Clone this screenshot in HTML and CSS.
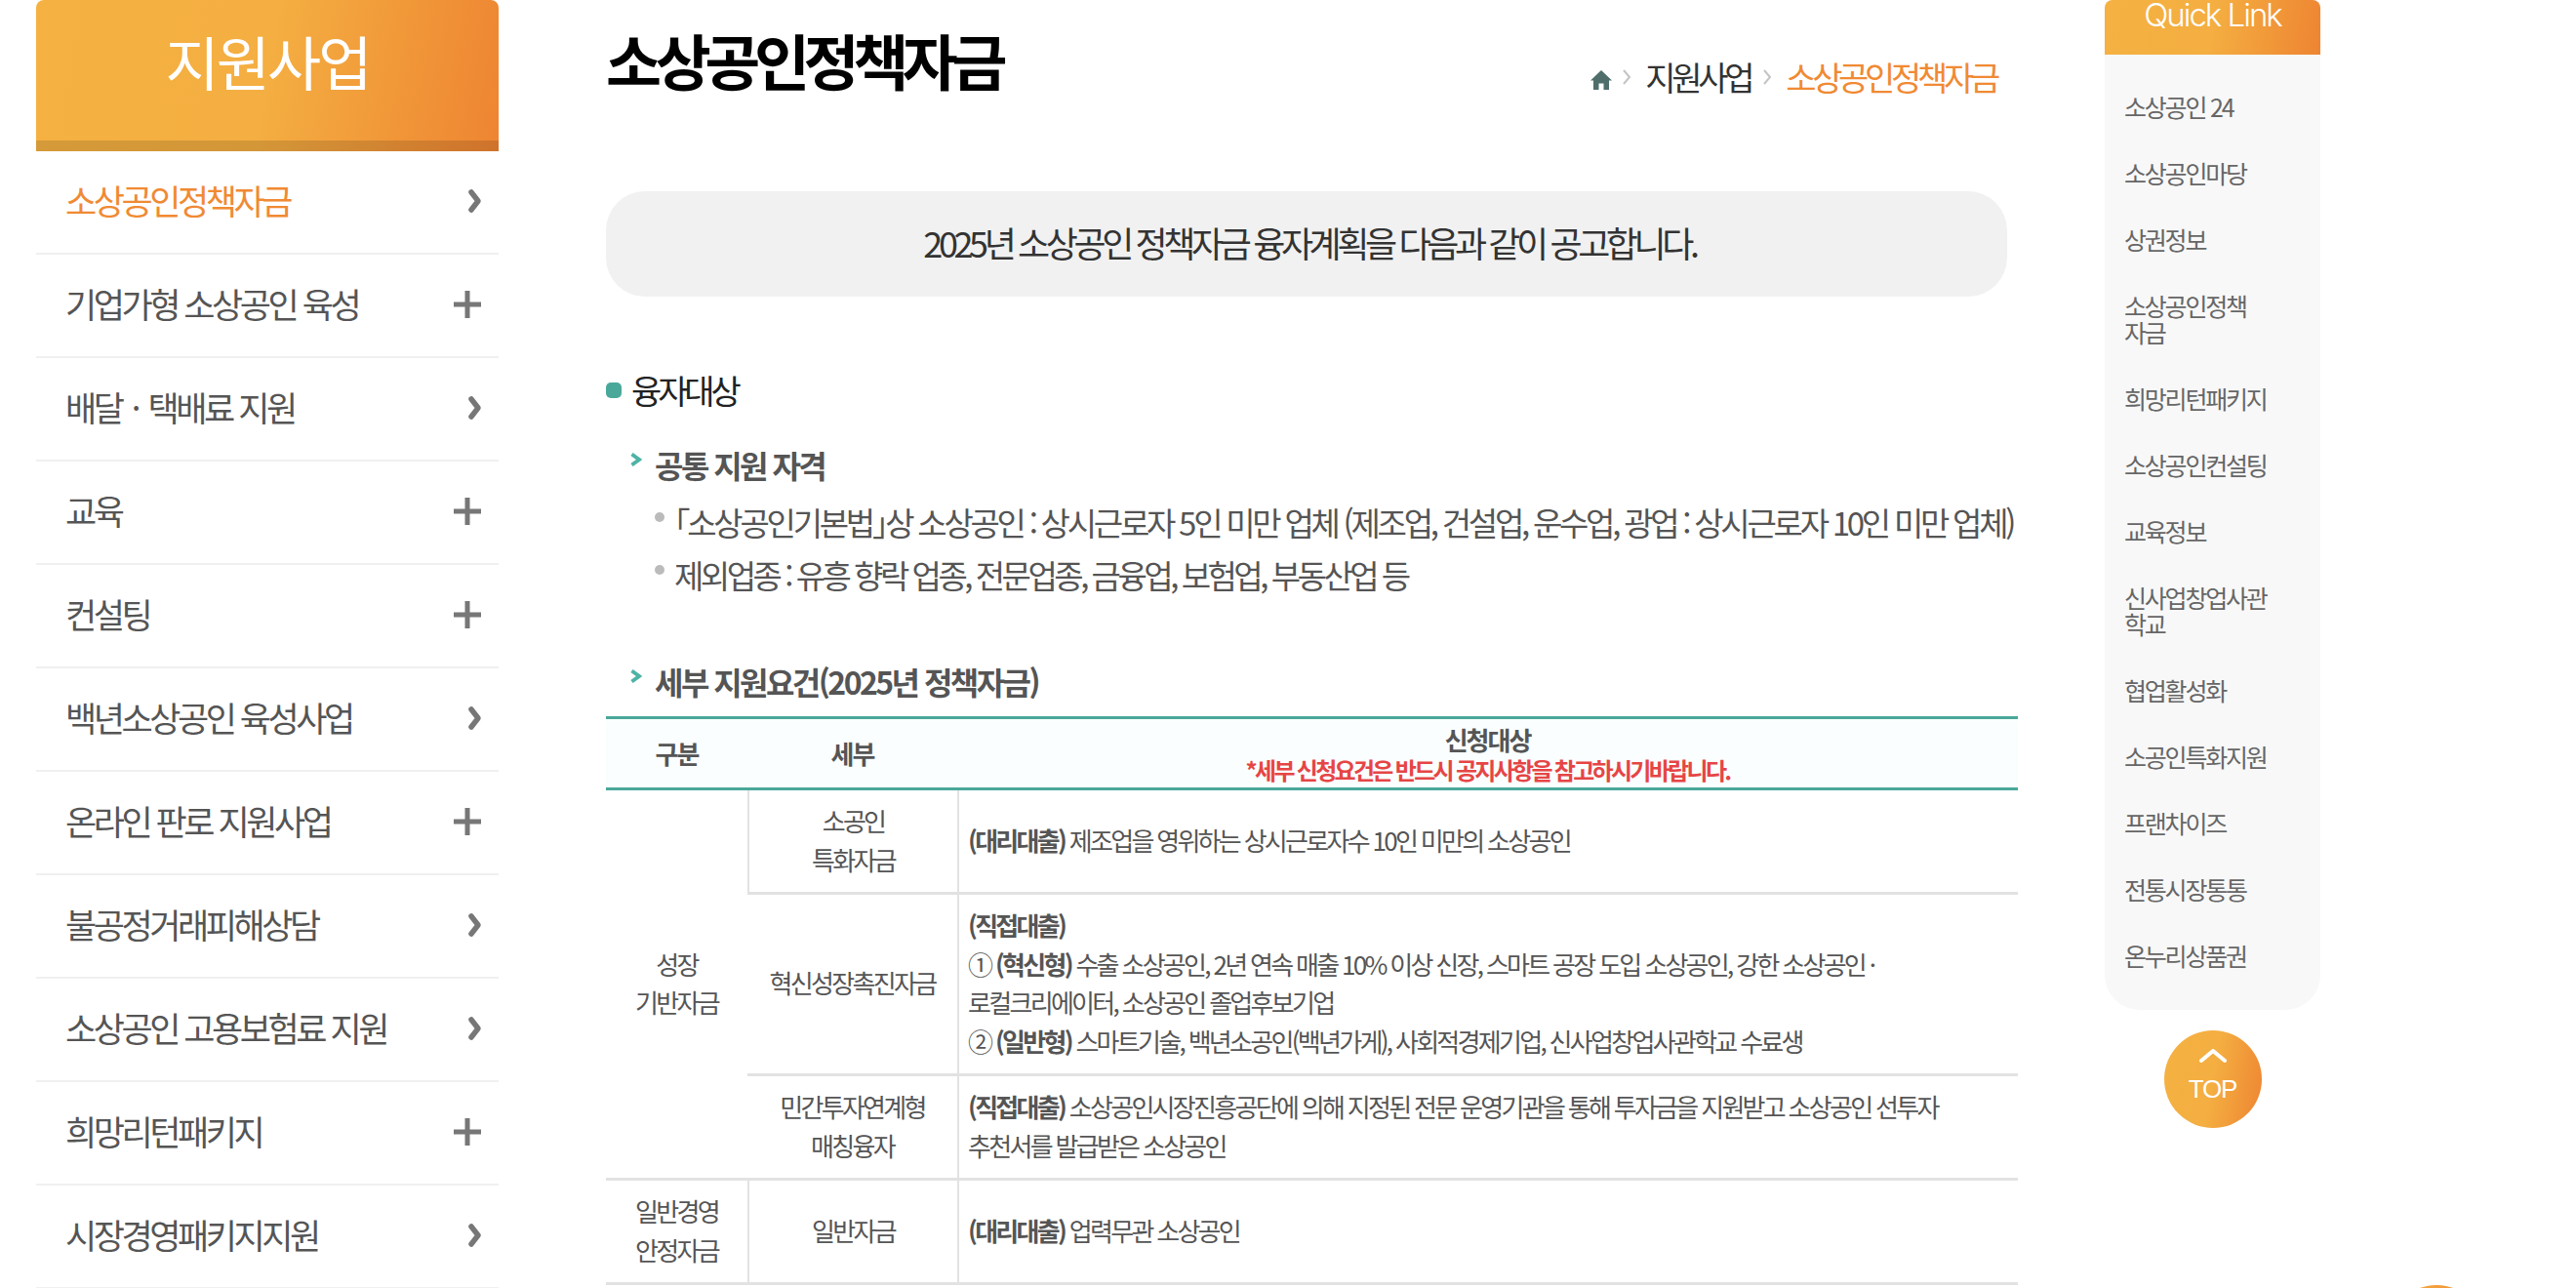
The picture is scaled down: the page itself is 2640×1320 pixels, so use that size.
FILE: index.html
```html
<!DOCTYPE html>
<html lang="ko">
<head>
<meta charset="utf-8">
<title>소상공인정책자금</title>
<link rel="stylesheet" href="styles.css">
</head>
<body>
<div class="page">
  <aside class="side">
    <h2 class="side-title">지원사업</h2>
    <ul class="side-menu">
      <li class="on"><span>소상공인정책자금</span><svg class="ic" viewBox="0 0 30 30"><path class="chev" d="M19 6 L26 15 L19 24"/></svg></li>
      <li><span>기업가형 소상공인 육성</span><svg class="ic" viewBox="0 0 30 30"><path class="plus" d="M1 15 H29 M15 1 V29"/></svg></li>
      <li><span>배달 <span class="mid">·</span> 택배료 지원</span><svg class="ic" viewBox="0 0 30 30"><path class="chev" d="M19 6 L26 15 L19 24"/></svg></li>
      <li><span>교육</span><svg class="ic" viewBox="0 0 30 30"><path class="plus" d="M1 15 H29 M15 1 V29"/></svg></li>
      <li><span>컨설팅</span><svg class="ic" viewBox="0 0 30 30"><path class="plus" d="M1 15 H29 M15 1 V29"/></svg></li>
      <li><span>백년소상공인 육성사업</span><svg class="ic" viewBox="0 0 30 30"><path class="chev" d="M19 6 L26 15 L19 24"/></svg></li>
      <li><span>온라인 판로 지원사업</span><svg class="ic" viewBox="0 0 30 30"><path class="plus" d="M1 15 H29 M15 1 V29"/></svg></li>
      <li><span>불공정거래피해상담</span><svg class="ic" viewBox="0 0 30 30"><path class="chev" d="M19 6 L26 15 L19 24"/></svg></li>
      <li><span>소상공인 고용보험료 지원</span><svg class="ic" viewBox="0 0 30 30"><path class="chev" d="M19 6 L26 15 L19 24"/></svg></li>
      <li><span>희망리턴패키지</span><svg class="ic" viewBox="0 0 30 30"><path class="plus" d="M1 15 H29 M15 1 V29"/></svg></li>
      <li><span>시장경영패키지지원</span><svg class="ic" viewBox="0 0 30 30"><path class="chev" d="M19 6 L26 15 L19 24"/></svg></li>
    </ul>
  </aside>

  <main class="main">
    <header class="head">
      <h1 class="title">소상공인정책자금</h1>
      <nav class="crumb">
        <svg class="home" viewBox="0 0 22 20"><path d="M11 0 L22 10.5 H19 V20 H13.5 V13.5 H8.5 V20 H3 V10.5 H0 Z"/></svg>
        <svg class="sep" viewBox="0 0 10 16"><path d="M2 1 L8 8 L2 15"/></svg>
        <span>지원사업</span>
        <svg class="sep" viewBox="0 0 10 16"><path d="M2 1 L8 8 L2 15"/></svg>
        <span class="cur">소상공인정책자금</span>
      </nav>
    </header>

    <p class="notice">2025년 소상공인 정책자금 융자계획을 다음과 같이 공고합니다.</p>

    <h3 class="h-a">융자대상</h3>
    <h4 class="h-b"><svg class="tri" viewBox="0 0 13 14"><path d="M2.5 1.5 L10 7 L2.5 12.5"/></svg>공통 지원 자격</h4>
    <ul class="dots">
      <li><span class="br">「</span>소상공인기본법<span class="br">」</span>상 소상공인 : 상시근로자 5인 미만 업체 (제조업, 건설업, 운수업, 광업 : 상시근로자 10인 미만 업체)</li>
      <li>제외업종 : 유흥 향락 업종, 전문업종, 금융업, 보험업, 부동산업 등</li>
    </ul>
    <h4 class="h-b h-b2"><svg class="tri" viewBox="0 0 13 14"><path d="M2.5 1.5 L10 7 L2.5 12.5"/></svg>세부 지원요건(2025년 정책자금)</h4>

    <table class="tbl">
      <colgroup><col class="c1"><col class="c2"><col></colgroup>
      <thead>
        <tr><th>구분</th><th>세부</th><th><div>신청대상</div><div class="red">*세부 신청요건은 반드시 공지사항을 참고하시기바랍니다.</div></th></tr>
      </thead>
      <tbody>
        <tr>
          <td class="ctr" rowspan="3">성장<br>기반자금</td>
          <td class="ctr">소공인<br>특화자금</td>
          <td><b>(대리대출)</b> 제조업을 영위하는 상시근로자수 10인 미만의 소상공인</td>
        </tr>
        <tr>
          <td class="ctr">혁신성장촉진자금</td>
          <td><b>(직접대출)</b><br>① <b>(혁신형)</b> 수출 소상공인, 2년 연속 매출 10% 이상 신장, 스마트 공장 도입 소상공인, 강한 소상공인 ·<br>로컬크리에이터, 소상공인 졸업후보기업<br>② <b>(일반형)</b> 스마트기술, 백년소공인(백년가게), 사회적경제기업, 신사업창업사관학교 수료생</td>
        </tr>
        <tr>
          <td class="ctr">민간투자연계형<br>매칭융자</td>
          <td><b>(직접대출)</b> 소상공인시장진흥공단에 의해 지정된 전문 운영기관을 통해 투자금을 지원받고 소상공인 선투자<br>추천서를 발급받은 소상공인</td>
        </tr>
        <tr>
          <td class="ctr">일반경영<br>안정자금</td>
          <td class="ctr">일반자금</td>
          <td><b>(대리대출)</b> 업력무관 소상공인</td>
        </tr>
      </tbody>
    </table>
  </main>

  <aside class="quick">
    <div class="quick-box">
      <h2 class="quick-title">Quick Link</h2>
      <ul class="quick-list">
        <li>소상공인 24</li>
        <li>소상공인마당</li>
        <li>상권정보</li>
        <li>소상공인정책<br>자금</li>
        <li>희망리턴패키지</li>
        <li>소상공인컨설팅</li>
        <li>교육정보</li>
        <li>신사업창업사관<br>학교</li>
        <li>협업활성화</li>
        <li>소공인특화지원</li>
        <li>프랜차이즈</li>
        <li>전통시장통통</li>
        <li>온누리상품권</li>
      </ul>
    </div>
    <a class="top">
      <svg viewBox="0 0 28 14"><path d="M2 12 L14 2 L26 12"/></svg>
      <span>TOP</span>
    </a>
  </aside>
</div>
<div class="float-btn"></div>
</body>
</html>
```

FILE: styles.css
```css
* { box-sizing: border-box; }
html, body { margin: 0; padding: 0; height: 100%; overflow: hidden; background: #fff; }
body { font-family: "Noto Sans CJK KR", "Noto Sans", sans-serif; color: #555; }
ul { list-style: none; margin: 0; padding: 0; }
h1, h2, h3, h4, p { margin: 0; font-weight: 400; }

.page { display: flex; align-items: flex-start; padding-left: 37px; }

.side { width: 474px; flex: none; }
.side-title {
  height: 155px; padding-top: 26px; text-align: center;
  font-size: 60px; line-height: 72px; letter-spacing: -3px; color: #fff;
  border-radius: 8px 8px 0 0;
  background: linear-gradient(100deg, #f5b142 0%, #f4ae41 50%, #ee8432 100%);
  box-shadow: inset 0 -11px 0 rgba(0,0,0,.13);
}
.side-menu li {
  height: 106px; padding: 0 17px 5px 30px;
  display: flex; align-items: center; justify-content: space-between;
  font-size: 35px; letter-spacing: -3.45px; color: #555;
  border-bottom: 2px solid #f0f0f0;
}
.side-menu li.on { color: #f08a33; }
.mid { margin: 0 4px; }
.ic { width: 30px; height: 30px; flex: none; margin-top: 3px; }
.chev, .plus { fill: none; stroke: #777; stroke-width: 5px; }
.chev { stroke-width: 5.5px; stroke-linecap: round; stroke-linejoin: round; }

.main { width: 1447px; flex: none; margin-left: 110px; }
.head { display: flex; align-items: flex-end; justify-content: space-between; height: 103px; padding-right: 22px; }
.title { font-size: 62px; line-height: 72px; font-weight: 700; letter-spacing: -6.4px; color: #000; margin-top: 25px; align-self: flex-start; }
.crumb { display: flex; align-items: center; font-size: 34px; line-height: 44px; letter-spacing: -4.3px; color: #333; margin-bottom: 2px; }
.cur { color: #f08a33; }
.home { width: 22px; height: 20px; fill: #4f6e6b; margin: 6px -2px 0 0; }
.sep { width: 10px; height: 16px; fill: none; stroke: #c4c4c4; stroke-width: 2px; margin: 0 14px 0 12px; }

.notice {
  width: 1436px; height: 108px; margin-top: 93px; border-radius: 40px; padding-left: 6px;
  background: #f1f1f1; text-align: center;
  font-size: 36px; line-height: 105px; letter-spacing: -4.4px; color: #333;
}
.h-a { position: relative; margin-top: 72px; padding-left: 26px; font-size: 34px; line-height: 48px; letter-spacing: -4.1px; color: #222; }
.h-a::before { content: ""; position: absolute; left: 0; top: 16px; width: 16px; height: 16px; border-radius: 5px; background: #4aa89a; }
.h-b { position: relative; padding-left: 50px; margin-top: 29px; font-size: 32px; line-height: 46px; font-weight: 700; letter-spacing: -2.55px; color: #555; }
.tri { position: absolute; left: 24px; top: 11px; width: 13px; height: 14px; fill: none; stroke: #4db3a5; stroke-width: 3.8px; }
.dots { margin-top: 9px; padding-left: 50px; }
.dots li { position: relative; padding-left: 20px; font-size: 33px; line-height: 54px; letter-spacing: -3.5px; color: #555; white-space: nowrap; }
.dots li:first-child { letter-spacing: -3.26px; }
.dots li::before { content: ""; position: absolute; left: 0; top: 17px; width: 10px; height: 10px; border-radius: 50%; background: #bbb; }
.br { font-feature-settings: "halt"; }
.h-b2 { margin-top: 59px; }

.tbl { width: 100%; border-collapse: separate; border-spacing: 0; table-layout: fixed; margin-top: 13px; font-size: 26px; line-height: 39.5px; letter-spacing: -2.7px; color: #555; }
.c1 { width: 145px; }
.c2 { width: 215px; }
.tbl th { height: 74px; padding: 4px 0; background: #fafefe; border-top: 3px solid #4aa89a; border-bottom: 3px solid #4aa89a; font-weight: 700; line-height: 34px; letter-spacing: -2px; color: #555; }
.tbl .red { color: #e64545; font-size: 24px; line-height: 28px; letter-spacing: -2.7px; }
.tbl td { padding: 11px 9px 14px; border-bottom: 3px solid #e2e2e2; border-left: 2px solid #e2e2e2; vertical-align: middle; }
.tbl td:first-child { border-left: 0; }
.tbl td.ctr { text-align: center; padding: 11px 0 14px; }
.tbl b { font-weight: 700; }

.quick { width: 221px; flex: none; margin-left: 89px; }
.quick-box { height: 1035px; background: #f8f8f8; border-radius: 8px 8px 36px 36px; }
.quick-title {
  height: 56px; padding-top: 2px; text-align: center; color: #fff;
  font-family: "Inter", sans-serif; font-size: 33px; line-height: 26px; letter-spacing: -2px; font-weight: 300;
  border-radius: 8px 8px 0 0;
  background: linear-gradient(100deg, #f5b142 0%, #f4ae41 50%, #ee8432 100%);
}
.quick-list { padding: 40px 20px 0; }
.quick-list li { font-size: 25px; line-height: 27px; letter-spacing: -2.2px; color: #666; margin-bottom: 41px; }
.top {
  display: flex; flex-direction: column; align-items: center; justify-content: center;
  width: 100px; height: 100px; margin: 21px auto 0; border-radius: 50%;
  background: linear-gradient(100deg, #f5b142 0%, #f4ae41 50%, #ee8432 100%);
  color: #fff; font-family: "Liberation Sans", sans-serif; font-size: 26px; line-height: 30px; letter-spacing: -1.1px;
}
.top svg { width: 28px; height: 14px; fill: none; stroke: #fff; stroke-width: 4px; stroke-linecap: round; stroke-linejoin: round; margin: -6px 0 12px; }

.float-btn { position: fixed; left: 2447px; top: 1317px; width: 100px; height: 100px; border-radius: 50%; background: linear-gradient(100deg, #f5b142 0%, #ee8432 100%); }
```
